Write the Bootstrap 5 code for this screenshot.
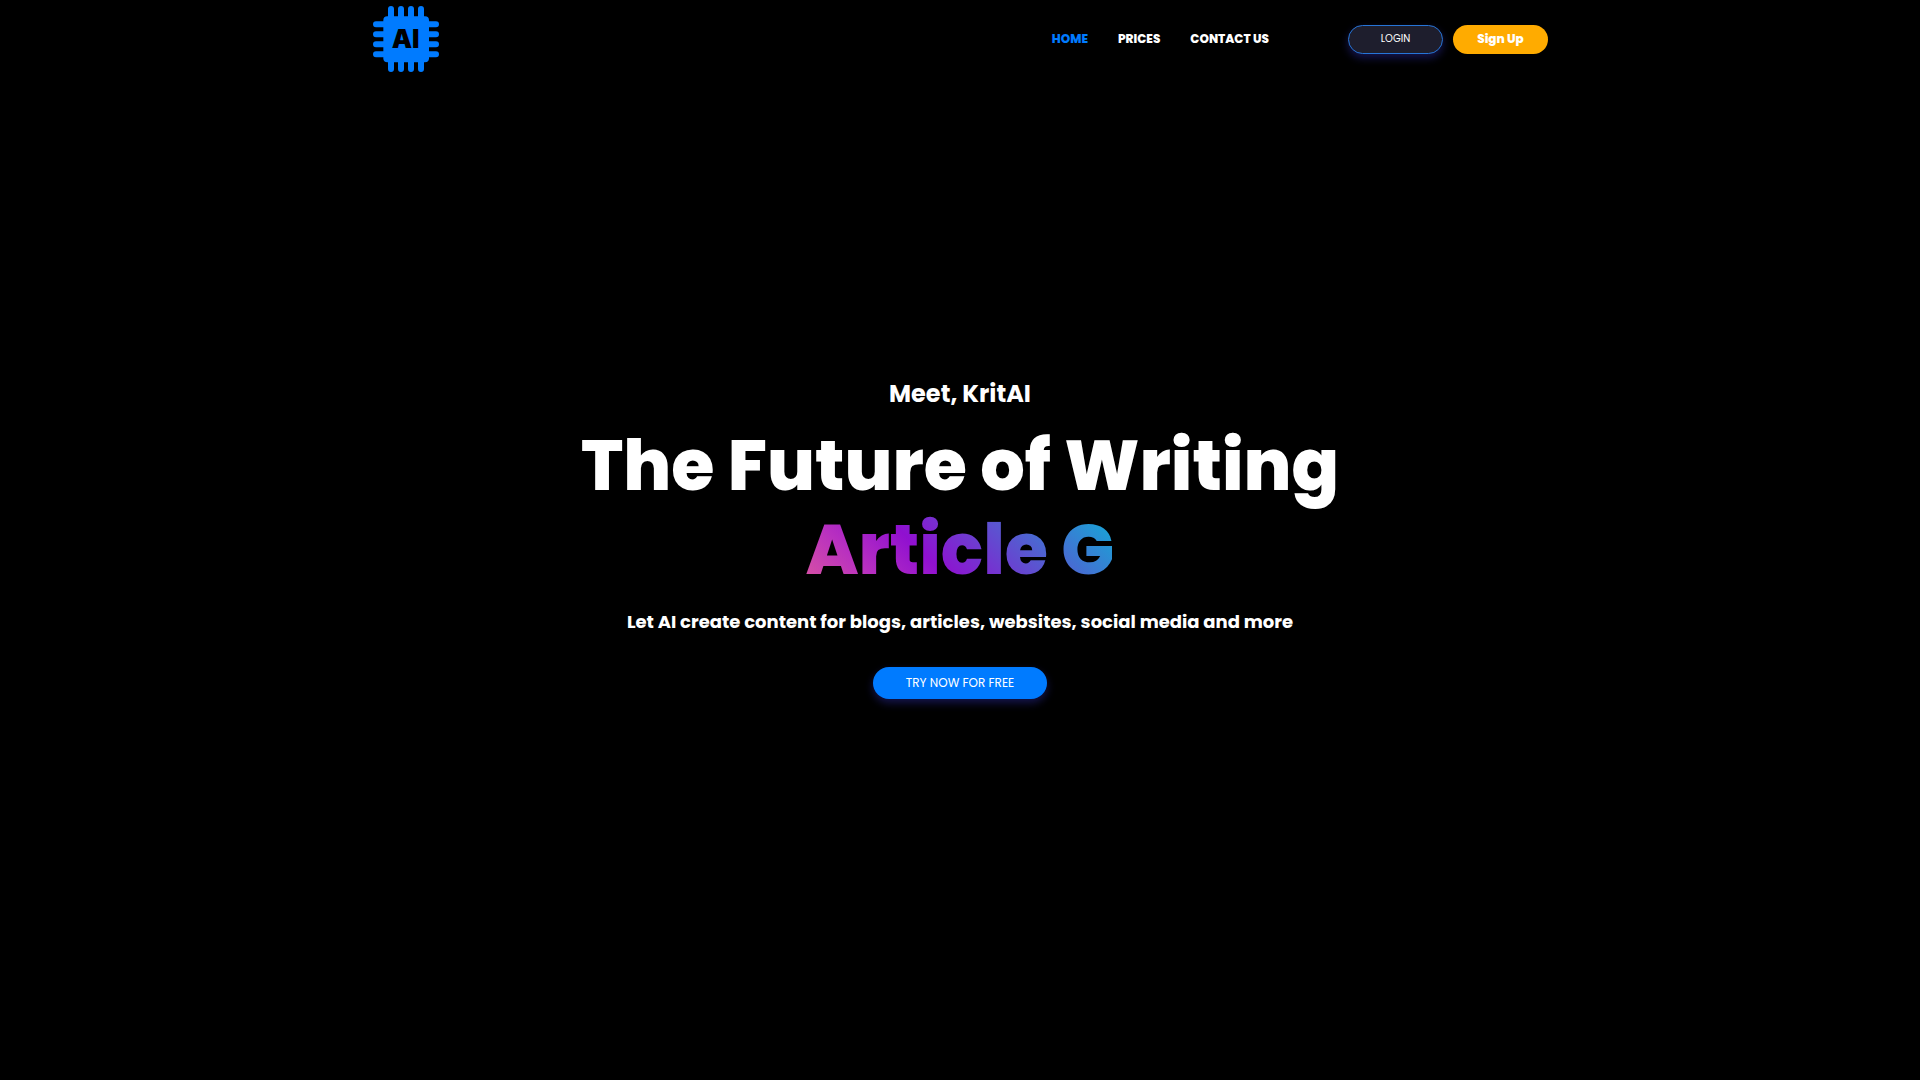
<!DOCTYPE html>
<html lang="en">
<head>
<meta charset="utf-8">
<meta name="viewport" content="width=device-width, initial-scale=1">
<title>KritAI</title>
<link href="https://cdn.jsdelivr.net/npm/bootstrap@5.3.0/dist/css/bootstrap.min.css" rel="stylesheet">
<style>
  body { background: #000; color: #fff; font-family: Poppins, Inter, "Open Sans", sans-serif; }
  .page-width { max-width: 1200px; }
  .site-nav { --bs-navbar-padding-y: 6px; --bs-navbar-nav-link-padding-x: 15px; }
  .site-nav .navbar-brand { --bs-navbar-brand-padding-y: 0; }
  .site-nav .nav-link { color: #fff; font-size: 12px; line-height: 18px; font-weight: 800; }
  .site-nav .nav-link.active { color: #007bff; }
  .chip-logo { width: 67px; height: 66px; display: block; }
  .chip-logo text { font-family: Inter, "Open Sans", sans-serif; font-weight: 900; font-size: 77px; }
  .nav-actions { gap: 10px; }
  .pill { border-radius: 50px; line-height: 18px; border: 0; }
  .pill-top { width: 95px; height: 29px; padding: 0; }
  .pill-login { background: #1e1e2d; color: #fff; font-size: 10px; font-weight: 400; border: 1px solid #2675d8; box-shadow: 0 4px 9px rgba(60, 60, 220, .35); }
  .pill-signup { background: #ffab00; color: #fff; font-size: 12px; font-weight: 800; }
  .pill-try { background: #007bff; color: #fff; font-size: 12px; font-weight: 400; padding: 7px 33px; box-shadow: 0 4px 9px rgba(60, 60, 220, .35); }
  .hero { padding-bottom: 84px; }
  .hero-meet { font-size: 24px; line-height: 36px; font-weight: 700; margin-bottom: 12px; }
  .hero-title { font-size: 70px; line-height: 84px; font-weight: 800; }
  .hero-word { background: linear-gradient(45deg, #e05a9c 0%, #b830c0 22%, #9010d0 40%, #5a55d0 65%, #08b8d8 100%); -webkit-background-clip: text; background-clip: text; color: transparent; }
  .hero-sub { font-size: 18px; line-height: 28px; font-weight: 700; margin-bottom: 31px; }
</style>
</head>
<body class="d-flex flex-column min-vh-100">
<nav class="navbar navbar-expand site-nav">
  <div class="container page-width">
    <a class="navbar-brand" href="#" aria-label="KritAI">
      <svg class="chip-logo" viewBox="-3 0 201 198">
        <g fill="#007bff">
          <rect x="31" y="31" width="137" height="138" rx="12"/>
          <path d="M45 35V9q0-9 9-9t9 9v26zM75 35V9q0-9 9-9t9 9v26zM105 35V9q0-9 9-9t9 9v26zM135 35V9q0-9 9-9t9 9v26z"/>
          <path d="M45 163v26q0 9 9 9t9-9v-26zM75 163v26q0 9 9 9t9-9v-26zM105 163v26q0 9 9 9t9-9v-26zM135 163v26q0 9 9 9t9-9v-26z"/>
          <path d="M35 46H9q-9 0-9 9t9 9h26zM35 76H9q-9 0-9 9t9 9h26zM35 106H9q-9 0-9 9t9 9h26zM35 136H9q-9 0-9 9t9 9h26z"/>
          <path d="M163 46h26q9 0 9 9t-9 9h-26zM163 76h26q9 0 9 9t-9 9h-26zM163 106h26q9 0 9 9t-9 9h-26zM163 136h26q9 0 9 9t-9 9h-26z"/>
        </g>
        <text x="98" y="125" text-anchor="middle" fill="#000">AI</text>
      </svg>
    </a>
    <div class="d-flex align-items-center">
      <ul class="navbar-nav me-5">
        <li class="nav-item"><a class="nav-link active" aria-current="page" href="#">HOME</a></li>
        <li class="nav-item"><a class="nav-link" href="#">PRICES</a></li>
        <li class="nav-item"><a class="nav-link" href="#">CONTACT US</a></li>
      </ul>
      <div class="d-flex nav-actions ms-3">
        <button type="button" class="btn pill pill-top pill-login">LOGIN</button>
        <button type="button" class="btn pill pill-top pill-signup">Sign Up</button>
      </div>
    </div>
  </div>
</nav>
<main class="container page-width hero flex-grow-1 d-flex flex-column align-items-center justify-content-center text-center">
  <p class="hero-meet">Meet, KritAI</p>
  <h1 class="hero-title mb-3">The Future of Writing<br><span class="hero-word">Article G</span></h1>
  <p class="hero-sub">Let AI create content for blogs, articles, websites, social media and more</p>
  <button type="button" class="btn pill pill-try">TRY NOW FOR FREE</button>
</main>
<script src="https://cdn.jsdelivr.net/npm/bootstrap@5.3.0/dist/js/bootstrap.bundle.min.js"></script>
</body>
</html>
